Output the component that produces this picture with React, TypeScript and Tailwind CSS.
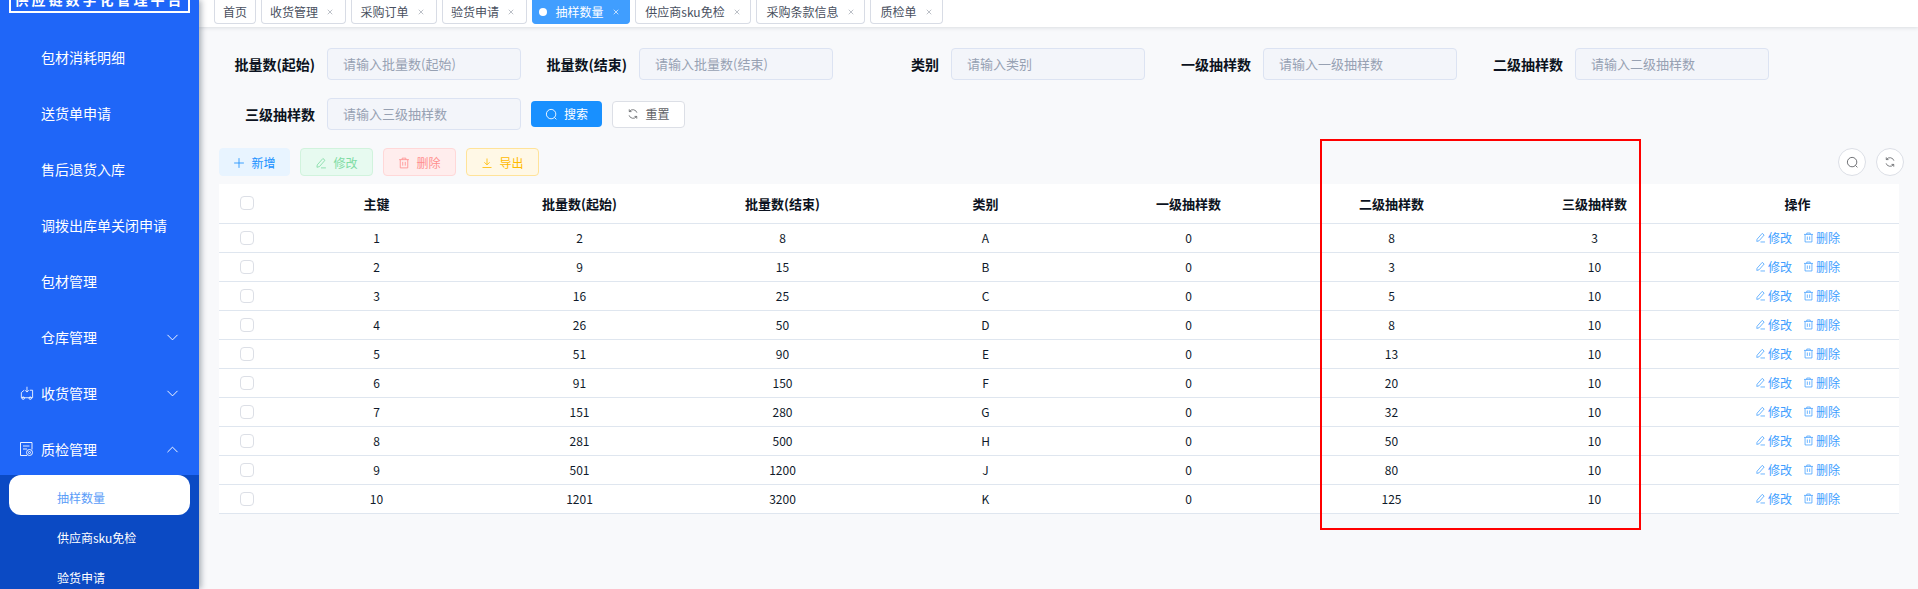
import { ChevronDown, ChevronUp, X } from "lucide-react";

const font = "font-['Noto_Sans_CJK_SC','Noto_Sans',sans-serif]";

const tabs = [
  { label: "首页", w: "w-[42px]", plain: true },
  { label: "收货管理", w: "w-[85px] pr-[3px]" },
  { label: "采购订单", w: "w-[86px] pr-[3px]" },
  { label: "验货申请", w: "w-[85px] pr-[3px]" },
  { label: "抽样数量", w: "w-[98px] pr-[3px]", active: true },
  { label: "供应商sku免检", w: "w-[116px]" },
  { label: "采购条款信息", w: "w-[109px]" },
  { label: "质检单", w: "w-[73px]" },
];

const rows = [
  [1, 2, 8, "A", 0, 8, 3],
  [2, 9, 15, "B", 0, 3, 10],
  [3, 16, 25, "C", 0, 5, 10],
  [4, 26, 50, "D", 0, 8, 10],
  [5, 51, 90, "E", 0, 13, 10],
  [6, 91, 150, "F", 0, 20, 10],
  [7, 151, 280, "G", 0, 32, 10],
  [8, 281, 500, "H", 0, 50, 10],
  [9, 501, 1200, "J", 0, 80, 10],
  [10, 1201, 3200, "K", 0, 125, 10],
];

const filters = [
  { label: "批量数(起始)", hint: "请输入批量数(起始)" },
  { label: "批量数(结束)", hint: "请输入批量数(结束)" },
  { label: "类别", hint: "请输入类别" },
  { label: "一级抽样数", hint: "请输入一级抽样数" },
  { label: "二级抽样数", hint: "请输入二级抽样数" },
];

const headers = ["主键", "批量数(起始)", "批量数(结束)", "类别", "一级抽样数", "二级抽样数", "三级抽样数", "操作"];

// element 风格的细线图标
function Icon({ size = 12, children }: { size?: number; children: React.ReactNode }) {
  return (
    <svg width={size} height={size} viewBox="0 0 16 16" fill="none" stroke="currentColor" strokeWidth="1.1" className="shrink-0">
      {children}
    </svg>
  );
}

const SearchIcon = ({ size }: { size?: number }) => (
  <Icon size={size}><circle cx="7.5" cy="7.5" r="5.8" /><path d="M11.6 11.6 14 14" /></Icon>
);
const RefreshIcon = ({ size }: { size?: number }) => (
  <Icon size={size}>
    <path d="M13.2 6.2A5.6 5.6 0 0 0 3.3 4.6" />
    <path d="M2.8 9.8a5.6 5.6 0 0 0 9.9 1.6" />
    <path d="M3 1.8v3h3M13 14.2v-3h-3" />
  </Icon>
);
const PlusIcon = ({ size }: { size?: number }) => (
  <Icon size={size}><path d="M8 1.5v13M1.5 8h13" /></Icon>
);
const EditIcon = ({ size }: { size?: number }) => (
  <Icon size={size}>
    <path d="M3 10.5 10.5 2l2.8 2.4-7.4 8.4-3.3.9z" />
    <path d="M8 14.5h6.5" />
  </Icon>
);
const DeleteIcon = ({ size }: { size?: number }) => (
  <Icon size={size}>
    <path d="M1.5 3.5h13M5.5 3.5V1.5h5v2" />
    <path d="M3 3.5v11h10v-11" />
    <path d="M6.3 6.5v5M9.7 6.5v5" />
  </Icon>
);
const ExportIcon = ({ size }: { size?: number }) => (
  <Icon size={size}>
    <path d="M8 2v8M4.5 7 8 10.5 11.5 7" />
    <path d="M2 14h12" />
  </Icon>
);

function TruckIcon() {
  return (
    <svg width="15" height="15" viewBox="0 0 16 16" fill="none" stroke="currentColor" strokeWidth="0.9">
      <path d="M5.5 4.5 2.5 7v5.5H14.5V4.5h-3" />
      <path d="M8.5 0.8v5.5M6.5 4.5l2 2 2-2" />
      <circle cx="4.5" cy="13" r="1.3" />
      <circle cx="12" cy="13" r="1.3" />
    </svg>
  );
}

function InspectIcon() {
  return (
    <svg width="15" height="16" viewBox="0 0 15 16" fill="none" stroke="currentColor" strokeWidth="0.9">
      <path d="M8 14.5H1.5v-13H13v7" />
      <path d="M4 5h6.5M4 8h4" />
      <circle cx="10.5" cy="11.5" r="3" />
      <circle cx="10.5" cy="11.5" r="1" />
    </svg>
  );
}

function MenuItem({ label, icon, open }: { label: string; icon?: React.ReactNode; open?: boolean }) {
  return (
    <div className="flex h-14 shrink-0 items-center pl-[19px] pr-[17px] pt-1 text-sm text-white">
      <span className="flex w-[22px] shrink-0 items-center">{icon}</span>
      <span className="flex-1">{label}</span>
      {open === true && <ChevronUp size={19} strokeWidth={1.2} />}
      {open === false && <ChevronDown size={19} strokeWidth={1.2} />}
    </div>
  );
}

function FilterItem({ label, hint }: { label: string; hint: string }) {
  return (
    <div className="flex h-8 w-[303px] items-center">
      <label className="w-[97px] text-right text-sm font-bold text-[#0b1220]">{label}</label>
      <div className="ml-[12px] flex h-8 w-[194px] items-center rounded border border-[#dce3f2] bg-[#f3f5fa] px-[15px] text-[13px] text-[#97a1b3]">
        {hint}
      </div>
    </div>
  );
}

function ToolButton({ label, icon, cls }: { label: string; icon: React.ReactNode; cls: string }) {
  return (
    <button className={`flex h-7 items-center justify-center gap-[6px] rounded border pt-px text-xs ${cls}`}>
      {icon}
      {label}
    </button>
  );
}

export default function App() {
  return (
    <div className={`flex h-[589px] w-[1918px] overflow-hidden bg-[#f8f9fb] ${font}`}>
      <aside className="z-10 flex w-[199px] shrink-0 flex-col overflow-hidden bg-[#1f66f8] shadow-[2px_0_6px_rgba(0,21,41,0.35)]">
        <div className="h-[27px] shrink-0">
          <div className="mx-[9px] flex h-[13px] items-end justify-center overflow-hidden whitespace-nowrap border-2 border-t-0 border-white pb-[5px] text-sm font-bold leading-[14px] tracking-[3px] text-white">
            供应链数字化管理平台
          </div>
        </div>
        <MenuItem label="包材消耗明细" />
        <MenuItem label="送货单申请" />
        <MenuItem label="售后退货入库" />
        <MenuItem label="调拨出库单关闭申请" />
        <MenuItem label="包材管理" />
        <MenuItem label="仓库管理" open={false} />
        <MenuItem label="收货管理" open={false} icon={<TruckIcon />} />
        <MenuItem label="质检管理" open icon={<InspectIcon />} />
        <div className="flex-1 bg-[#0b4ac4] text-xs text-white">
          <div className="mx-[9px] flex h-10 items-center rounded-xl bg-white pl-12 pt-[5px] text-[#5a9cf8]">抽样数量</div>
          <div className="flex h-10 items-center pl-[57px] pt-[6px]">供应商sku免检</div>
          <div className="flex h-10 items-center pl-[57px] pt-[6px]">验货申请</div>
        </div>
      </aside>

      <main className="relative min-w-0 flex-1">
        <div className="flex h-[27px] items-start gap-[5px] bg-white pl-[15px] shadow-[0_1px_4px_rgba(0,21,41,0.12)]">
          {tabs.map((t) => (
            <div
              key={t.label}
              className={`flex h-[24px] items-center justify-center gap-[8px] rounded-b border border-t-0 text-xs ${t.w} ${
                t.active ? "border-[#409eff] bg-[#409eff] text-white" : "border-[#d8dce5] bg-white text-[#495060]"
              }`}
            >
              {t.active && <span className="h-2 w-2 rounded-full bg-white" />}
              {t.label}
              {!t.plain && <X size={8} strokeWidth={2} className={t.active ? "text-white" : "text-[#9aa0ab]"} />}
            </div>
          ))}
        </div>

        <div className="pl-[20px] pr-[19px] pt-[21px]">
          <div className="-ml-px flex flex-wrap gap-x-[9px] gap-y-[18px]">
            {filters.map((f) => (
              <FilterItem key={f.label} {...f} />
            ))}
            <div className="flex items-center">
              <FilterItem label="三级抽样数" hint="请输入三级抽样数" />
              <button className="ml-[10px] flex h-[26px] w-[71px] items-center justify-center gap-[6px] rounded bg-[#1890ff] text-xs text-white">
                <SearchIcon size={13} />
                搜索
              </button>
              <button className="ml-[10px] flex h-[27px] w-[73px] items-center justify-center gap-[6px] rounded border border-[#dcdfe6] bg-white text-xs text-[#606266]">
                <RefreshIcon size={12} />
                重置
              </button>
            </div>
          </div>

          <div className="mt-[18px] flex h-7 items-center gap-[10px]">
            <ToolButton label="新增" cls="w-[71px] border-[#e8f4ff] bg-[#e8f4ff] text-[#1890ff]" icon={<PlusIcon size={12} />} />
            <ToolButton label="修改" cls="w-[73px] border-[#d1f3dd] bg-[#e7faf0] text-[#7fdca4]" icon={<EditIcon size={12} />} />
            <ToolButton label="删除" cls="w-[73px] border-[#ffd8d8] bg-[#ffeded] text-[#ff8f8f]" icon={<DeleteIcon size={12} />} />
            <ToolButton label="导出" cls="w-[73px] border-[#ffe399] bg-[#fff8e6] text-[#ffba00]" icon={<ExportIcon size={12} />} />
            <div className="ml-auto mr-[-5px] flex gap-[10px]">
              <button className="flex h-7 w-7 items-center justify-center rounded-full border border-[#dcdfe6] bg-white text-[#606266]"><SearchIcon size={13} /></button>
              <button className="flex h-7 w-7 items-center justify-center rounded-full border border-[#dcdfe6] bg-white text-[#606266]"><RefreshIcon size={12} /></button>
            </div>
          </div>

          <table className="mt-2 w-[1680px] table-fixed border-collapse bg-white text-[13px] text-[#0f1a2b]">
            <colgroup>
              <col className="w-[56px]" />
              {headers.map((h) => <col key={h} className="w-[203px]" />)}
            </colgroup>
            <thead>
              <tr className="h-[39px] border-b border-[#dfe6ef]">
                <th><span className="mx-auto block h-[14px] w-[14px] rounded-sm border border-[#dcdfe6] bg-white" /></th>
                {headers.map((h) => <th key={h} className="font-bold text-[#0b1220]">{h}</th>)}
              </tr>
            </thead>
            <tbody>
              {rows.map((r) => (
                <tr key={r[0]} className="h-[29px] border-b border-[#dfe6ef] text-center text-xs">
                  <td><span className="mx-auto block h-[14px] w-[14px] rounded-sm border border-[#dcdfe6] bg-white" /></td>
                  {r.map((v, i) => <td key={i} className="pt-px">{v}</td>)}
                  <td className="pt-px">
                    <span className="inline-flex items-center gap-[11px] text-[#409eff]">
                      <span className="inline-flex items-center gap-[2px]"><EditIcon size={11} />修改</span>
                      <span className="inline-flex items-center gap-[2px]"><DeleteIcon size={11} />删除</span>
                    </span>
                  </td>
                </tr>
              ))}
            </tbody>
          </table>
        </div>

        {/* 截图上的红色标注框 */}
        <div className="pointer-events-none absolute left-[1121px] top-[139px] h-[391px] w-[321px] border-2 border-[#f00]" />
      </main>
    </div>
  );
}
